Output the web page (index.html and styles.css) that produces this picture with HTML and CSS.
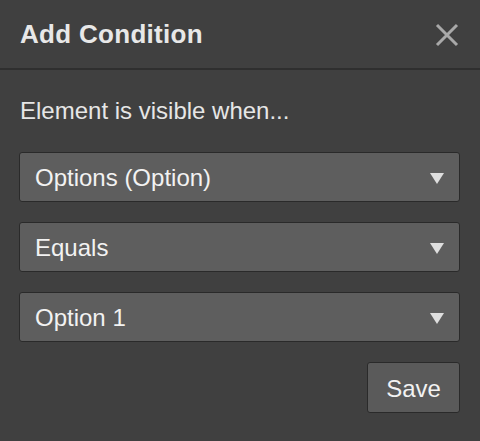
FILE: index.html
```html
<!DOCTYPE html>
<html lang="en">
  <head>
    <meta charset="UTF-8" />
    <meta name="viewport" content="width=device-width, initial-scale=1.0" />
    <title>Add Condition</title>
    <link rel="stylesheet" href="styles.css">
  </head>
  <body>
    <div class="dialog">
      <div class="dialog-header">
        <h2>Add Condition</h2>
        <button class="close-btn" aria-label="Close">
          <svg width="24" height="24" viewBox="0 0 24 24">
            <path d="M2 2 L22 22 M22 2 L2 22" stroke="#a9a9a9" stroke-width="3" />
          </svg>
        </button>
      </div>

      <div class="dialog-body">
        <p class="label">Element is visible when...</p>

        <div class="select">
          <span>Options (Option)</span>
          <span class="caret"></span>
        </div>
        <div class="select">
          <span>Equals</span>
          <span class="caret"></span>
        </div>
        <div class="select">
          <span>Option 1</span>
          <span class="caret"></span>
        </div>

        <div class="actions">
          <button class="save-btn">Save</button>
        </div>
      </div>
    </div>
  </body>
</html>
```

FILE: styles.css
```css
html,
body {
  margin: 0;
  height: 100%;
  background: #404040;
}
body {
  font-family: "Liberation Sans", Arial, sans-serif;
  color: #f0f0f0;
}
.dialog {
  width: 480px;
}
.dialog-header {
  height: 70px;
  border-bottom: 2px solid #2f2f2f;
  display: flex;
  align-items: center;
  justify-content: space-between;
  padding: 0 21px 0 20px;
  box-sizing: border-box;
}
.dialog-header h2 {
  margin: 0;
  font-size: 26px;
  font-weight: bold;
  color: #e8e8e8;
  letter-spacing: 0.3px;
}
.close-btn {
  background: none;
  border: none;
  padding: 0;
  width: 24px;
  height: 24px;
  display: flex;
  margin-top: 1px;
}
.dialog-body {
  padding: 27px 20px 20px 19px;
  display: flex;
  flex-direction: column;
  gap: 20px;
}
.label {
  margin: 0 0 7px 1px;
  font-size: 24px;
  line-height: 28px;
  color: #e6e6e6;
}
.select {
  height: 50px;
  box-sizing: border-box;
  background: #5e5e5e;
  border: 1px solid #2a2a2a;
  border-radius: 3px;
  display: flex;
  align-items: center;
  justify-content: space-between;
  padding: 2px 15px 0 15px;
  font-size: 24px;
  line-height: 28px;
  color: #f2f2f2;
}
.caret {
  width: 0;
  height: 0;
  border-left: 7.5px solid transparent;
  border-right: 7.5px solid transparent;
  border-top: 11px solid #dedede;
}
.actions {
  display: flex;
  justify-content: flex-end;
  margin-top: 0;
}
.save-btn {
  width: 93px;
  height: 51px;
  background: #5a5a5a;
  border: 1px solid #2a2a2a;
  border-radius: 3px;
  font-family: "Liberation Sans", Arial, sans-serif;
  font-size: 24px;
  color: #f2f2f2;
  padding: 2px 0 0;
}
```
